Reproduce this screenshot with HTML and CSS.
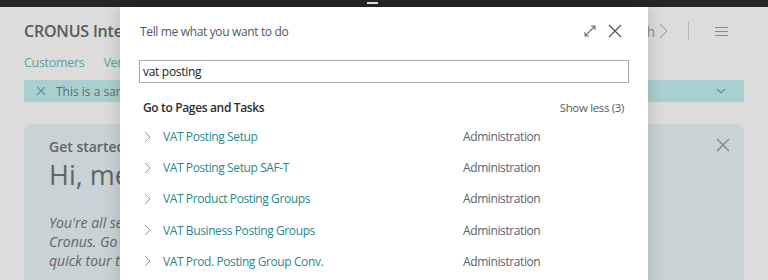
FILE: index.html
```html
<!DOCTYPE html>
<html lang="en">
<head>
    <meta charset="UTF-8">
    <title>Tell me what you want to do</title>
    <link rel="stylesheet" href="styles.css">
</head>
<body>

    <div class="topbar"><span class="handle"></span></div>

    <div class="page">
        <div class="header">
            <div class="company">CRONUS International Ltd.</div>
            <div class="header-actions">
                <span class="search-hint">Search
                    <svg width="9" height="16" viewBox="0 0 9 16"><path d="M1 1L8 8L1 15" stroke="#8a8a8a" stroke-width="1" fill="none"/></svg>
                </span>
                <span class="divider"></span>
                <span class="burger"><i></i><i></i><i></i></span>
            </div>
        </div>
        <div class="nav">
            <span>Customers</span>
            <span>Vendors</span>
        </div>
        <div class="banner">
            <svg class="banner-x" width="10" height="10" viewBox="0 0 10 10"><path d="M1 1L9 9M9 1L1 9" stroke="#6c8d8e" stroke-width="1.1"/></svg>
            <span>This is a sandbox environment for test purposes.</span>
            <svg class="banner-chev" width="10" height="6" viewBox="0 0 10 6"><path d="M1 1L5 5L9 1" stroke="#5f9293" stroke-width="1.1" fill="none"/></svg>
        </div>
        <div class="card">
            <svg class="card-x" width="14" height="14" viewBox="0 0 14 14"><path d="M1 1L13 13M13 1L1 13" stroke="#7a8486" stroke-width="1.3"/></svg>
            <div class="card-label">Get started</div>
            <div class="card-title">Hi, meet Business Central</div>
            <div class="card-text">You're all set to explore Business Central with<br>Cronus. Go ahead and take a look around, or take a<br>quick tour to learn more.</div>
        </div>
    </div>

    <div class="dialog">
        <div class="dialog-head">
            <span class="dialog-title">Tell me what you want to do</span>
            <span class="dialog-tools">
                <svg width="14" height="14" viewBox="0 0 14 14"><path d="M2 12L12 2M8 2H12V6M2 8V12H6" stroke="#6b6b6b" stroke-width="1.1" fill="none"/></svg>
                <svg width="14" height="14" viewBox="0 0 14 14"><path d="M1 1L13 13M13 1L1 13" stroke="#555" stroke-width="1.3"/></svg>
            </span>
        </div>
        <div class="search-box">vat posting</div>
        <div class="group-head">
            <span class="group-title">Go to Pages and Tasks</span>
            <span class="show-less">Show less (3)</span>
        </div>
        <ul class="results">
            <li><svg class="chev" width="7" height="12" viewBox="0 0 7 12"><path d="M1 1L6 6L1 11" stroke="#5fb0b2" stroke-width="1" fill="none"/></svg><span class="name">VAT Posting Setup</span><span class="cat">Administration</span></li>
            <li><svg class="chev" width="7" height="12" viewBox="0 0 7 12"><path d="M1 1L6 6L1 11" stroke="#5fb0b2" stroke-width="1" fill="none"/></svg><span class="name">VAT Posting Setup SAF-T</span><span class="cat">Administration</span></li>
            <li><svg class="chev" width="7" height="12" viewBox="0 0 7 12"><path d="M1 1L6 6L1 11" stroke="#5fb0b2" stroke-width="1" fill="none"/></svg><span class="name">VAT Product Posting Groups</span><span class="cat">Administration</span></li>
            <li><svg class="chev" width="7" height="12" viewBox="0 0 7 12"><path d="M1 1L6 6L1 11" stroke="#5fb0b2" stroke-width="1" fill="none"/></svg><span class="name">VAT Business Posting Groups</span><span class="cat">Administration</span></li>
            <li><svg class="chev" width="7" height="12" viewBox="0 0 7 12"><path d="M1 1L6 6L1 11" stroke="#5fb0b2" stroke-width="1" fill="none"/></svg><span class="name">VAT Prod. Posting Group Conv.</span><span class="cat">Administration</span></li>
        </ul>
    </div>

</body>
</html>
```

FILE: styles.css
```css
body {
    margin: 0;
    padding: 0;
    width: 768px;
    height: 280px;
    overflow: hidden;
    font-family: "Open Sans", "Noto Sans", sans-serif;
    background-color: #dcdcdc;
    position: relative;
}
.topbar {
    height: 7px;
    background-color: #262626;
    position: relative;
}
.handle {
    position: absolute;
    left: 367px;
    top: 2px;
    width: 11px;
    height: 2px;
    background: #e8e8e8;
}
.page {
    padding: 0 24px;
}
.header {
    display: flex;
    justify-content: space-between;
    align-items: center;
    height: 48px;
}
.company {
    font-size: 16px;
    font-weight: 600;
    color: #5a5a5a;
    letter-spacing: -0.2px;
}
.header-actions {
    display: flex;
    align-items: center;
    gap: 20px;
    color: #8a8a8a;
    font-size: 14px;
    padding-right: 16px;
}
.search-hint {
    display: flex;
    align-items: center;
    gap: 4px;
}
.divider {
    width: 1px;
    height: 18px;
    background: #b8b8b8;
}
.burger {
    display: flex;
    flex-direction: column;
    gap: 3px;
    width: 13px;
    margin-left: 6px;
}
.burger i {
    height: 1px;
    background: #8a8a8a;
}
.nav {
    display: flex;
    gap: 19px;
    font-size: 12.5px;
    color: #5d9ea0;
    height: 14px;
    align-items: center;
    margin-bottom: 11px;
    letter-spacing: -0.3px;
}
.banner {
    display: flex;
    align-items: center;
    height: 22px;
    background: #a9d0d0;
    font-size: 12px;
    color: #5e6b6c;
    padding: 0 12px;
    gap: 10px;
}
.banner-chev {
    margin-left: auto;
    margin-right: 6px;
}
.card {
    position: relative;
    margin-top: 22px;
    height: 200px;
    background: #c9d3d5;
    border-radius: 6px;
    padding: 13px 25px;
    color: #5e6668;
}
.card-x {
    position: absolute;
    right: 14px;
    top: 14px;
}
.card-label {
    font-size: 14px;
    font-weight: 600;
}
.card-title {
    font-size: 27px;
    margin-top: 0;
}
.card-text {
    margin-top: 20px;
    font-size: 14px;
    font-style: italic;
    line-height: 19px;
}
.dialog {
    position: absolute;
    left: 120px;
    top: 7px;
    width: 528px;
    height: 290px;
    background: #fff;
    box-shadow: 0 0 16px rgba(0,0,0,0.18);
    padding: 0 19px;
    box-sizing: border-box;
}
.dialog-head {
    display: flex;
    justify-content: space-between;
    align-items: center;
    height: 48px;
}
.dialog-title {
    font-size: 12px;
    color: #4f5a66;
    padding-left: 1px;
    letter-spacing: -0.35px;
}
.dialog-tools {
    display: flex;
    gap: 11px;
    padding-right: 7px;
}
.search-box {
    margin-top: 5px;
    height: 23px;
    width: 490px;
    border: 1px solid #a5aab3;
    box-sizing: border-box;
    font-size: 12px;
    color: #222;
    padding: 0 3px;
    line-height: 21px;
    letter-spacing: -0.3px;
}
.group-head {
    display: flex;
    justify-content: space-between;
    align-items: center;
    line-height: 14px;
    padding: 18px 5px 6px 4px;
}
.group-title {
    font-size: 12px;
    font-weight: 600;
    color: #2e2e2e;
    letter-spacing: -0.35px;
}
.show-less {
    font-size: 11.5px;
    color: #5a5a5a;
    letter-spacing: -0.35px;
}
.results {
    list-style: none;
    margin: 0;
    padding: 0;
}
.results li {
    display: flex;
    align-items: center;
    height: 31.2px;
    font-size: 12px;
    letter-spacing: -0.4px;
}
.chev {
    margin-left: 5px;
}
.name {
    color: #1f8a8c;
    margin-left: 12px;
    width: 300px;
}
.cat {
    color: #5a6170;
}
```
